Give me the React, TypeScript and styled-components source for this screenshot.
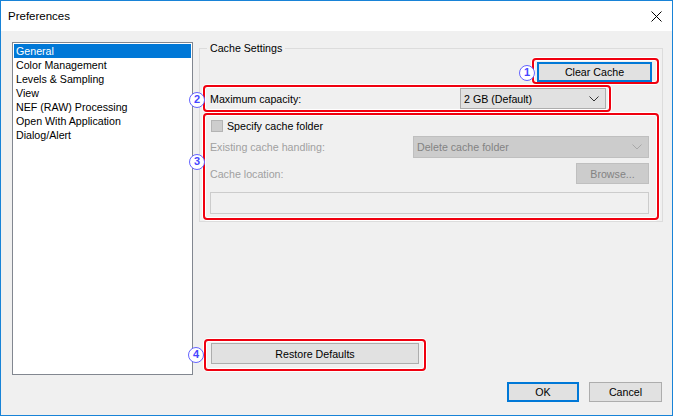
import React from 'react';
import styled, { createGlobalStyle } from 'styled-components';

const GlobalStyle = createGlobalStyle`
  html, body {
    margin: 0;
    padding: 0;
    background: #ffffff;
  }
  body {
    font-family: "Liberation Sans", Arial, sans-serif;
    font-size: 8pt;
    color: #000;
  }
  * {
    box-sizing: border-box;
  }
`;

const Window = styled.div`
  width: 673px;
  height: 416px;
  border: 1px solid #1883d7;
  display: flex;
  flex-direction: column;
  background: #f0f0f0;
  overflow: hidden;
`;

const TitleBar = styled.div`
  flex: none;
  height: 30px;
  background: #ffffff;
  display: flex;
  align-items: center;
  justify-content: space-between;
  padding: 0 10px 0 7px;
  font-size: 11.5px;
`;

const Main = styled.div`
  flex: none;
  height: 344px;
  display: flex;
  gap: 6px;
  padding: 11px 9px 0 11px;
`;

const List = styled.div`
  flex: none;
  width: 181px;
  height: 333px;
  background: #ffffff;
  border: 1px solid #828790;
  padding: 1px;
`;

const ListItem = styled.div<{ $selected?: boolean }>`
  height: 14px;
  line-height: 14px;
  padding-left: 2px;
  white-space: nowrap;
  background: ${p => (p.$selected ? '#0078d7' : 'transparent')};
  color: ${p => (p.$selected ? '#ffffff' : '#000000')};
`;

const RightPane = styled.div`
  flex: 1;
  display: flex;
  flex-direction: column;
`;

const Group = styled.fieldset`
  margin: 0;
  padding: 0 3px 1px 3px;
  border: 1px solid #dcdcdc;
  min-width: 0;
`;

const Legend = styled.legend`
  margin-left: 4px;
  padding: 0 3px;
  line-height: 13px;
`;

const GroupBody = styled.div`
  display: flex;
  flex-direction: column;
  padding-top: 3px;
`;

const Annotated = styled.div<{ $pad: string; $mt?: number }>`
  position: relative;
  border: 2px solid #f0000f;
  border-radius: 4px;
  padding: ${p => p.$pad};
  margin-top: ${p => p.$mt ?? 0}px;
  box-shadow: 0 0 0 1px #ffffff, inset 0 0 0 1px #ffffff;
`;

const Marker = styled.span<{ $left: number; $top: number }>`
  position: absolute;
  left: ${p => p.$left}px;
  top: ${p => p.$top}px;
  width: 16px;
  height: 16px;
  border-radius: 50%;
  border: 1.5px solid #6464ff;
  background: #ffffff;
  color: #4646ff;
  font-size: 11px;
  font-weight: bold;
  line-height: 13px;
  text-align: center;
`;

const RightRow = styled.div`
  display: flex;
  justify-content: flex-end;
`;

const FieldRow = styled.div<{ $mt?: number }>`
  display: flex;
  align-items: center;
  justify-content: space-between;
  margin-top: ${p => p.$mt ?? 0}px;
`;

const Label = styled.span<{ $disabled?: boolean }>`
  color: ${p => (p.$disabled ? '#a0a0a0' : '#000000')};
  white-space: nowrap;
`;

const Button = styled.div<{ $w: number; $h?: number; $focused?: boolean; $disabled?: boolean }>`
  width: ${p => p.$w}px;
  height: ${p => p.$h ?? 20}px;
  display: flex;
  align-items: center;
  justify-content: center;
  background: ${p => (p.$disabled ? '#cccccc' : '#e1e1e1')};
  border: ${p =>
    p.$focused ? '2px solid #0078d7' : p.$disabled ? '1px solid #bfbfbf' : '1px solid #adadad'};
  color: ${p => (p.$disabled ? '#838383' : '#000000')};
  white-space: nowrap;
`;

const Select = styled.div<{ $w: number; $h: number; $disabled?: boolean }>`
  width: ${p => p.$w}px;
  height: ${p => p.$h}px;
  display: flex;
  align-items: center;
  justify-content: space-between;
  padding: 0 6px 0 3px;
  background: ${p => (p.$disabled ? '#cccccc' : '#e1e1e1')};
  border: 1px solid ${p => (p.$disabled ? '#bfbfbf' : '#adadad')};
  color: ${p => (p.$disabled ? '#838383' : '#000000')};
  white-space: nowrap;
`;

const CheckRow = styled.div`
  height: 14px;
  display: flex;
  align-items: center;
  gap: 4px;
  padding-left: 1px;
`;

const CheckBox = styled.span`
  width: 12px;
  height: 12px;
  border: 1px solid #b4b4b4;
  background: #cdcdcd;
`;

const TextBox = styled.div`
  height: 22px;
  margin-top: 8px;
  border: 1px solid #cccccc;
  background: #f0f0f0;
`;

const BottomAnnotation = styled(Annotated)`
  margin-top: auto;
  margin-bottom: 4px;
  margin-left: 5px;
  align-self: flex-start;
`;

const Footer = styled.div`
  flex: 1;
  display: flex;
  justify-content: flex-end;
  align-items: flex-start;
  gap: 10px;
  padding: 7px 10px 0 0;
`;

const Chevron = ({ color }: { color: string }) => (
  <svg width="10" height="6" viewBox="0 0 10 6">
    <path d="M0.5 0.5 L5 5 L9.5 0.5" stroke={color} strokeWidth="1" fill="none" />
  </svg>
);

const CloseIcon = () => (
  <svg width="11" height="11" viewBox="0 0 11 11">
    <path d="M0.5 0.5 L10.5 10.5 M10.5 0.5 L0.5 10.5" stroke="#000" strokeWidth="1" />
  </svg>
);

const items = [
  'General',
  'Color Management',
  'Levels & Sampling',
  'View',
  'NEF (RAW) Processing',
  'Open With Application',
  'Dialog/Alert',
];

export default function App() {
  return (
    <>
      <GlobalStyle />
      <Window>
        <TitleBar>
          <span>Preferences</span>
          <CloseIcon />
        </TitleBar>
        <Main>
          <List>
            {items.map((item, i) => (
              <ListItem key={item} $selected={i === 0}>
                {item}
              </ListItem>
            ))}
          </List>
          <RightPane>
            <Group>
              <Legend>Cache Settings</Legend>
              <GroupBody>
                <RightRow>
                  <Annotated $pad="2px 5px 0 3px">
                    <Marker $left={-15} $top={5}>1</Marker>
                    <Button $w={115} $focused>Clear Cache</Button>
                  </Annotated>
                </RightRow>
                <Annotated $pad="1px 3px 1px 5px" $mt={1} style={{ width: 408 }}>
                  <Marker $left={-16} $top={5}>2</Marker>
                  <FieldRow>
                    <Label>Maximum capacity:</Label>
                    <Select $w={146} $h={21}>
                      <span>2 GB (Default)</span>
                      <Chevron color="#333" />
                    </Select>
                  </FieldRow>
                </Annotated>
                <Annotated $pad="4px 8px 4px 5px" $mt={1}>
                  <Marker $left={-16} $top={39}>3</Marker>
                  <CheckRow>
                    <CheckBox />
                    <Label>Specify cache folder</Label>
                  </CheckRow>
                  <FieldRow $mt={3}>
                    <Label $disabled>Existing cache handling:</Label>
                    <Select $w={236} $h={22} $disabled>
                      <span>Delete cache folder</span>
                      <Chevron color="#a8a8a8" />
                    </Select>
                  </FieldRow>
                  <FieldRow $mt={5}>
                    <Label $disabled>Cache location:</Label>
                    <Button $w={73} $h={21} $disabled>Browse...</Button>
                  </FieldRow>
                  <TextBox />
                </Annotated>
              </GroupBody>
            </Group>
            <BottomAnnotation $pad="2px 5px 5px 5px">
              <Marker $left={-18} $top={6}>4</Marker>
              <Button $w={208} $h={21}>Restore Defaults</Button>
            </BottomAnnotation>
          </RightPane>
        </Main>
        <Footer>
          <Button $w={72} $focused>OK</Button>
          <Button $w={73}>Cancel</Button>
        </Footer>
      </Window>
    </>
  );
}
